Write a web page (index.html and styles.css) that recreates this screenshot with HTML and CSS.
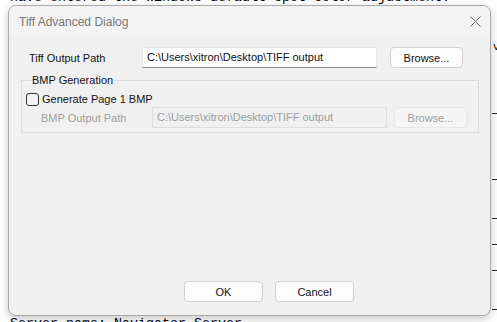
FILE: index.html
```html
<!DOCTYPE html>
<html lang="en">

<head>
  <meta charset="UTF-8" />
  <meta name="viewport" content="width=device-width, initial-scale=1.0" />
  <link rel="stylesheet" href="styles.css">
  <title>Tiff Advanced Dialog</title>
</head>

<body>
  <div class="page">
    <div class="page-main">
      <div class="console top">have entered the Windows default spot color adjustment.</div>
      <div class="console bottom">Server name: Navigator Server</div>
    </div>
    <div class="page-side">
      <div class="side-head">v</div>
      <div class="side-row r1"></div>
      <div class="side-row r2"></div>
      <div class="side-row r3"></div>
      <div class="side-row r3"></div>
      <div class="side-row r4"></div>
      <div class="side-row r5"></div>
    </div>
  </div>

  <div class="dialog">
    <div class="titlebar">
      <span class="title">Tiff Advanced Dialog</span>
      <svg class="close" width="11" height="11" viewBox="0 0 11 11">
        <path d="M0.5 0.5 L10.5 10.5 M10.5 0.5 L0.5 10.5" stroke="#6b6b6b" stroke-width="1" fill="none" />
      </svg>
    </div>

    <div class="dialog-body">
      <div class="row tiff-row">
        <span class="label">Tiff Output Path</span>
        <div class="input">C:\Users\xitron\Desktop\TIFF output</div>
        <button class="btn">Browse...</button>
      </div>

      <fieldset class="group">
        <legend>BMP Generation</legend>
        <label class="check-row">
          <span class="checkbox"></span>
          <span>Generate Page 1 BMP</span>
        </label>
        <div class="row bmp-row">
          <span class="label disabled">BMP Output Path</span>
          <div class="input disabled">C:\Users\xitron\Desktop\TIFF output</div>
          <button class="btn disabled" disabled>Browse...</button>
        </div>
      </fieldset>
    </div>

    <div class="footer">
      <button class="btn wide">OK</button>
      <button class="btn wide">Cancel</button>
    </div>
  </div>
</body>

</html>
```

FILE: styles.css
```css
* {
  box-sizing: border-box;
  padding: 0;
  margin: 0;
}

body {
  width: 497px;
  height: 322px;
  overflow: hidden;
  background: #fff;
  position: relative;
  font-family: "Liberation Sans", Arial, sans-serif;
}

/* page behind the dialog */
.page {
  display: flex;
  height: 322px;
}

.page-main {
  flex: 1;
  display: flex;
  flex-direction: column;
  justify-content: space-between;
  padding-left: 10px;
}

.console {
  font-family: "Liberation Mono", monospace;
  font-size: 13.33px;
  line-height: 16px;
  color: #000;
  white-space: nowrap;
}

.console.top {
  margin-top: -10px;
}

.console.bottom {
  margin-bottom: -10px;
}

.page-side {
  width: 5px;
  display: flex;
  flex-direction: column;
}

.side-head {
  font-family: "Liberation Mono", monospace;
  font-size: 11px;
  line-height: 11px;
  margin-top: 42px;
  height: 71px;
  padding-left: 1px;
  flex-shrink: 0;
}

.side-row {
  border-top: 1px solid #222;
  flex-shrink: 0;
}

.r1 {
  height: 66px;
}

.r2 {
  height: 39px;
}

.r3 {
  height: 26px;
}

.r4 {
  height: 39px;
}

.r5 {
  height: 13px;
}

/* dialog */
.dialog {
  position: absolute;
  left: 8px;
  top: 5px;
  width: 483px;
  height: 311px;
  background: #f0f0f0;
  border: 1px solid #a9a9a9;
  border-radius: 8px;
  box-shadow: 0 3px 10px rgba(0, 0, 0, 0.22);
  display: flex;
  flex-direction: column;
  font-size: 11px;
  color: #111;
}

.titlebar {
  height: 29px;
  background: #f3f3f3;
  border-radius: 8px 8px 0 0;
  display: flex;
  align-items: center;
  justify-content: space-between;
  padding: 0 9px 0 10px;
}

.title {
  font-size: 12px;
  color: #777;
  padding-top: 2px;
}

.close {
  margin-top: 2px;
}

.dialog-body {
  flex: 1;
  padding: 12px 11px 0 12px;
}

.row {
  display: flex;
  align-items: center;
  height: 21px;
}

.tiff-row {
  padding-left: 8px;
}

.tiff-row .label {
  width: 113px;
}

.input {
  width: 235px;
  height: 21px;
  background: #fff;
  border: 1px solid #e6e6e6;
  border-bottom-color: #8a8a8a;
  padding: 0 4px;
  line-height: 19px;
  white-space: nowrap;
  overflow: hidden;
}

.btn {
  font-family: inherit;
  font-size: 11px;
  color: #111;
  width: 73px;
  height: 21px;
  margin-left: 13px;
  background: #fdfdfd;
  border: 1px solid #d0d0d0;
  border-radius: 4px;
}

.group {
  margin-top: 6px;
  border: 1px solid #dcdcdc;
  padding: 0 0 4px 4px;
}

.group legend {
  margin-left: 5px;
  padding: 0 2px 0 1px;
  line-height: 12px;
}

.check-row {
  display: flex;
  align-items: center;
  gap: 3px;
  margin-top: 6px;
  height: 14px;
}

.checkbox {
  width: 13px;
  height: 13px;
  border: 1px solid #333;
  border-radius: 3px;
  background: #f4f4f4;
}

.bmp-row {
  margin-top: 1px;
  padding-left: 15px;
}

.bmp-row .label {
  width: 111px;
}

.label.disabled,
.input.disabled,
.btn.disabled {
  color: #9d9d9d;
}

.input.disabled {
  background: #f0f0f0;
  border: 1px solid #dedede;
}

.btn.disabled {
  margin-left: 7px;
  background: #f5f5f5;
  border-color: #e6e6e6;
}

.footer {
  display: flex;
  gap: 12px;
  padding: 0 0 13px 175px;
}

.btn.wide {
  width: 79px;
  margin-left: 0;
}
```
